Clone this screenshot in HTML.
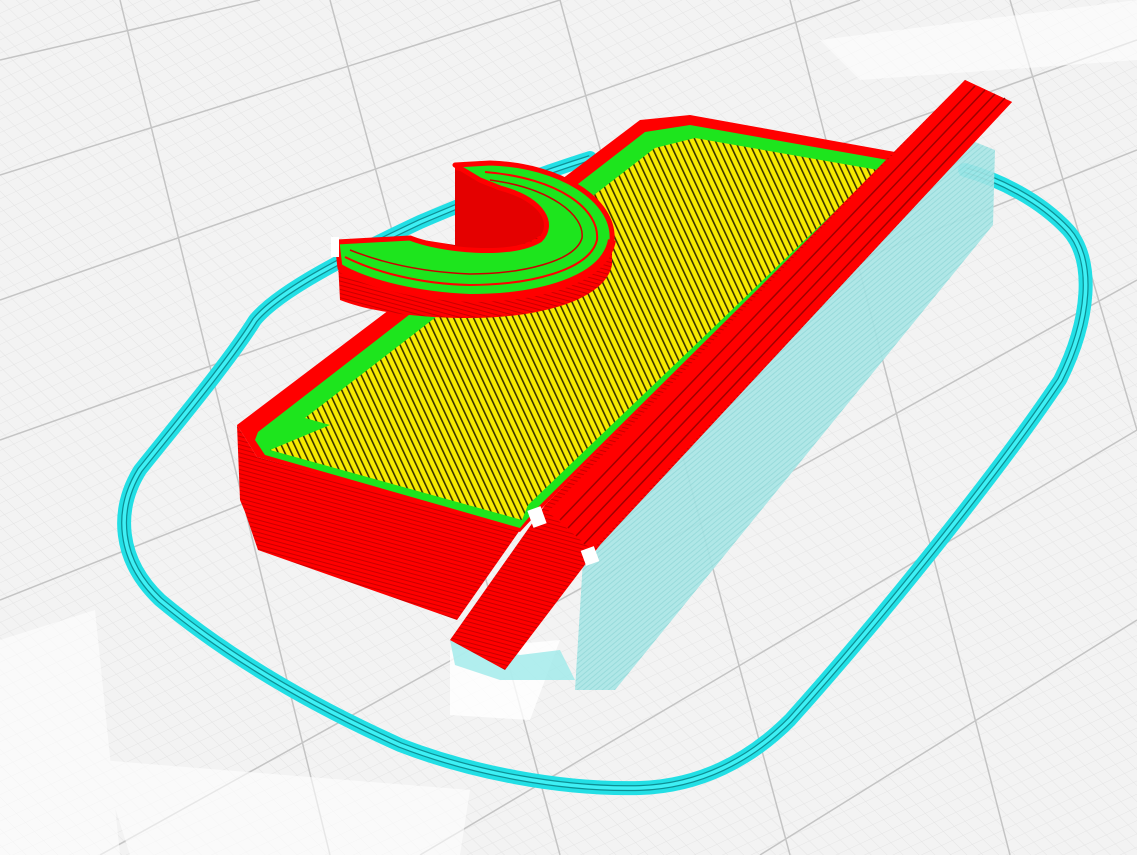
<!DOCTYPE html>
<html><head><meta charset="utf-8"><style>html,body{margin:0;padding:0;width:1137px;height:855px;overflow:hidden;background:#f3f3f3}</style></head>
<body>
<svg width="1137" height="855" viewBox="0 0 1137 855" xmlns="http://www.w3.org/2000/svg">
<defs>
<pattern id="fine" width="12" height="12" patternUnits="userSpaceOnUse" patternTransform="rotate(-25) skewX(20)">
<path d="M0 0H12M0 0V12" stroke="#e4e4e4" stroke-width="1"/></pattern>
<pattern id="yel" width="6" height="6" patternUnits="userSpaceOnUse" patternTransform="rotate(-25)">
<rect width="6" height="6" fill="#f7ea00"/><rect width="1.6" height="6" fill="#3a3500"/></pattern>
<pattern id="redl" width="6" height="4" patternUnits="userSpaceOnUse" patternTransform="rotate(15)">
<rect width="6" height="4" fill="#f00"/><rect width="6" height="1" y="3" fill="#c80000"/></pattern>
<pattern id="cyl" width="6" height="4" patternUnits="userSpaceOnUse" patternTransform="rotate(-40)">
<rect width="6" height="4" fill="#a8e6e6"/><rect width="6" height="1" y="3" fill="#8fd8d8"/></pattern>
</defs>
<rect width="1137" height="855" fill="#f3f3f3"/>
<rect width="1137" height="855" fill="url(#fine)"/>
<g stroke="#c4c4c4" stroke-width="1.5" fill="none">
<path d="M0 60L260 0M0 175L560 0M0 300L860 0M0 440L1137 40M0 600L1137 150M100 855L1137 280M420 855L1137 430M760 855L1137 620"/>
<path d="M120 0L330 855M330 0L560 855M560 0L790 855M790 0L1010 855M1010 0L1137 430"/>
</g>
<g fill="#ffffff" opacity="0.6">
<polygon points="820,40 1137,0 1137,60 860,80"/>
<polygon points="0,640 95,610 120,855 0,855"/>
<polygon points="100,760 470,790 460,855 130,855"/>
</g>
<g fill="#ffffff" opacity="0.8">
<polygon points="450,650 560,640 530,720 450,715"/>
</g>
<g fill="none">
<path d="M590,158 C520,180 460,205 420,222 C350,255 280,290 255,320 C230,360 180,420 140,470 C115,510 118,560 160,600 C220,650 300,700 400,745 C470,772 560,790 640,788 C700,786 750,760 790,720 C880,620 1000,470 1060,380 C1090,320 1095,260 1068,230 C1040,200 1000,180 965,170" stroke="#22dfe5" stroke-width="14" stroke-linecap="round"/>
<path d="M590,158 C520,180 460,205 420,222 C350,255 280,290 255,320 C230,360 180,420 140,470 C115,510 118,560 160,600 C220,650 300,700 400,745 C470,772 560,790 640,788 C700,786 750,760 790,720 C880,620 1000,470 1060,380 C1090,320 1095,260 1068,230 C1040,200 1000,180 965,170" stroke="#0e8f94" stroke-width="6"/>
<path d="M590,158 C520,180 460,205 420,222 C350,255 280,290 255,320 C230,360 180,420 140,470 C115,510 118,560 160,600 C220,650 300,700 400,745 C470,772 560,790 640,788 C700,786 750,760 790,720 C880,620 1000,470 1060,380 C1090,320 1095,260 1068,230 C1040,200 1000,180 965,170" stroke="#3ef0f5" stroke-width="3.5"/>
</g>
<polygon points="950,132 995,150 993,225 615,690 575,690 583,560" fill="url(#cyl)" opacity="0.9"/>
<polygon points="450,640 520,655 560,650 575,680 500,680 455,665" fill="#9eeaea" opacity="0.8"/>
<polygon points="237,425 257,457 520,530 457,620 258,550 245,512 240,500" fill="url(#redl)"/>
<polygon points="237,425 640,120 690,115 895,152 545,505 520,532 257,457" fill="#f00"/>
<polygon points="258,432 645,132 690,125 888,160 535,510 520,528 265,455 255,440" fill="#1de51d"/>
<polygon points="305,418 655,148 695,138 878,170 528,505 522,520 270,450 330,425" fill="url(#yel)"/>
<path d="M337,242 L410,238 L455,245 L455,165 L490,163 C560,165 615,200 612,240 L612,265 C605,300 540,318 470,318 C420,318 370,312 340,300 Z" fill="url(#redl)"/>
<path d="M455,170 L485,175 C530,185 555,210 545,230 C535,245 500,252 455,250 Z" fill="#e40000"/>
<path d="M455,165 L490,163 C560,165 615,200 612,240 C605,280 540,298 470,298 C420,296 370,285 340,268 L337,242 L410,238 C440,250 510,258 540,240 C555,225 545,200 500,188 L480,180 Z" fill="#1de51d" stroke="#f00" stroke-width="5" stroke-linejoin="round"/>
<path d="M485,172 C560,178 600,210 597,240 C590,270 530,285 470,285 C420,284 375,272 345,257" fill="none" stroke="#f00" stroke-width="2"/>
<path d="M490,180 C550,188 585,215 582,238 C575,262 520,274 470,274 C420,272 380,262 350,250" fill="none" stroke="#c00" stroke-width="1.5"/>
<path d="M340,268 C370,285 420,296 470,298 C540,298 605,280 612,240" fill="none" stroke="#f00" stroke-width="8"/>
<polygon points="965,80 1012,102 600,545 505,670 450,640 545,505" fill="url(#redl)"/>
<polygon points="965,80 1012,102 592,550 548,512" fill="#f00"/>
<g stroke="#a00000" stroke-width="1.5" fill="none">
<path d="M975,86L560,520M985,90L568,528M995,94L576,536M1005,98L584,544"/>
</g>
<rect x="530" y="508" width="14" height="18" fill="#fff" transform="rotate(-20 537 517)"/>
<rect x="583" y="548" width="14" height="16" fill="#fff" transform="rotate(-20 590 556)"/>
<rect x="331" y="237" width="8" height="20" fill="#fff"/>
</svg>
</body></html>
